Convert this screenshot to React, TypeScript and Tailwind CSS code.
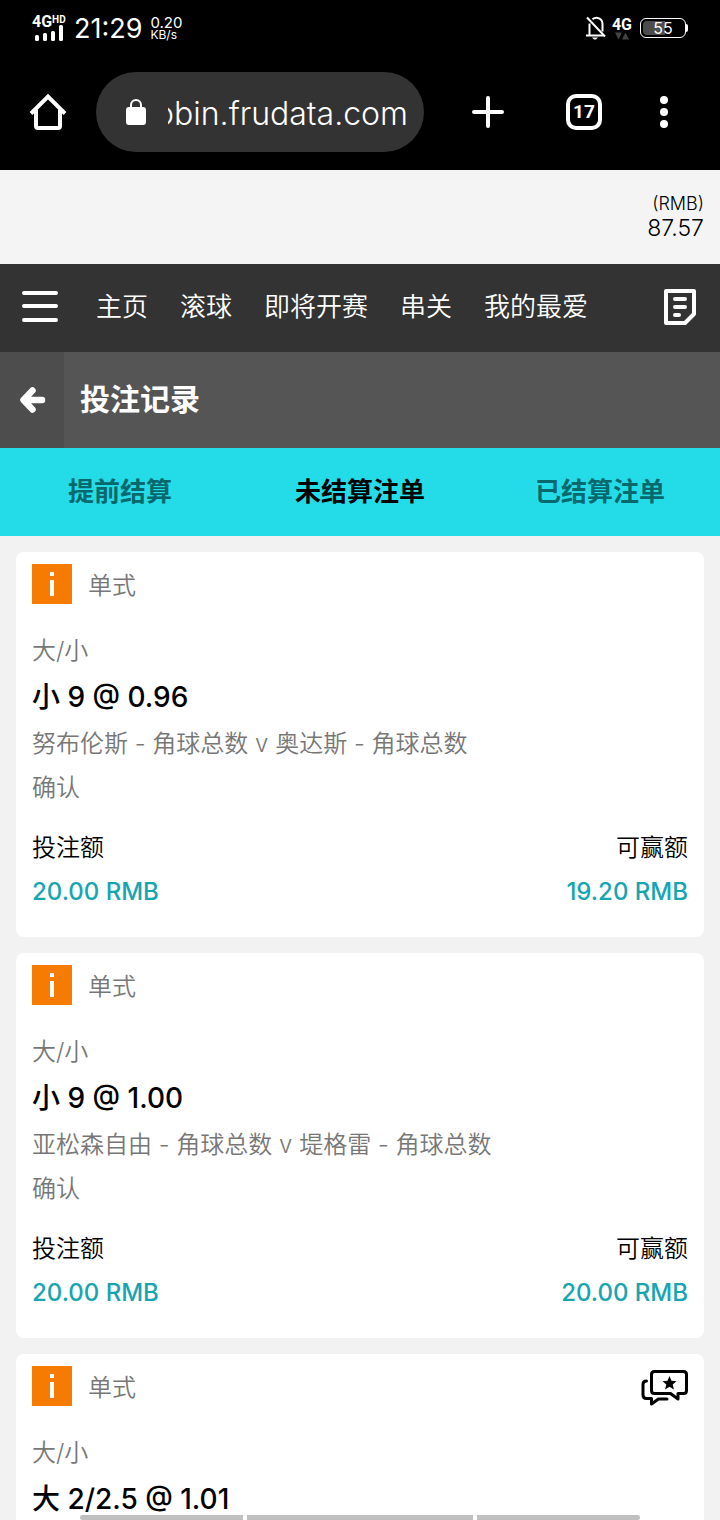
import React from 'react';

type Bet = {
  id: number;
  pick: string;
  match: string;
  stake: string;
  win: string;
  chat?: boolean;
};

const BETS: Bet[] = [
  {
    id: 1,
    pick: '小 9 @ 0.96',
    match: '努布伦斯 - 角球总数 v 奥达斯 - 角球总数',
    stake: '20.00 RMB',
    win: '19.20 RMB',
  },
  {
    id: 2,
    pick: '小 9 @ 1.00',
    match: '亚松森自由 - 角球总数 v 堤格雷 - 角球总数',
    stake: '20.00 RMB',
    win: '20.00 RMB',
  },
  { id: 3, pick: '大 2/2.5 @ 1.01', match: '', stake: '', win: '', chat: true },
];

const NAV = ['主页', '滚球', '即将开赛', '串关', '我的最爱'];
const TABS = ['提前结算', '未结算注单', '已结算注单'];

const StatusBar = () => {
  return (
    <div className="flex h-14 items-center justify-between px-8 text-white">
      <div className="flex items-center gap-2">
        <div className="flex w-[34px] flex-col">
          <div className="flex items-start font-[Roboto] font-bold">
            <span className="text-[16px] leading-[14px]">4G</span>
            <span className="text-[10px] leading-[9px]">HD</span>
          </div>
          <svg className="-mt-1 h-[16px] w-[34px]" viewBox="0 0 34 16" fill="currentColor">
            <rect x="3" y="10" width="4" height="6" rx="1.5" />
            <rect x="11" y="8" width="4" height="8" rx="1.5" />
            <rect x="19" y="6" width="4" height="10" rx="1.5" />
            <rect x="27" y="0" width="4" height="16" rx="1.5" />
          </svg>
        </div>
        <span className="pt-[2px] text-[27px] leading-8">21:29</span>
        <div className="flex flex-col">
          <span className="text-[15px] leading-[13px]">0.20</span>
          <span className="text-[12px] leading-[12px]">KB/s</span>
        </div>
      </div>
      <div className="flex items-center gap-1">
        <svg className="h-6 w-6" viewBox="0 0 24 24" fill="none" stroke="currentColor" strokeWidth="2">
          <path d="M2 19.5h17.500M5.500 19V7.500M8.500 3.200C12.500 0 18.500 2.400 18.500 8V15.500" />
          <path d="M3 1.500L21 20.500" />
          <path d="M8 21.500h6l-2 2h-2z" fill="currentColor" stroke="none" />
        </svg>
        <div className="flex flex-col items-center">
          <span className="font-[Roboto] text-[16px] leading-[15px] font-bold">4G</span>
          <svg className="h-2 w-4" viewBox="0 0 16 8" fill="#444">
            <path d="M1 .5h7L4.500 7.500zM8 7.500h7L11.500.5z" />
          </svg>
        </div>
        <div className="ml-1 flex items-center">
          <div className="relative flex h-5 w-[46px] items-center justify-center rounded-md border border-white">
            <div className="absolute top-[2px] left-[2px] h-[14px] w-[22px] rounded-l bg-[#4c4c4c]" />
            <span className="relative text-[16px] leading-4">55</span>
          </div>
          <div className="h-2 w-[2px] rounded-r bg-white" />
        </div>
      </div>
    </div>
  );
};

const BrowserBar = () => {
  return (
    <div className="flex h-[114px] items-center pr-8 pb-[2px] pl-7 text-white">
      <button aria-label="Home">
        <svg className="h-10 w-10" viewBox="0 0 40 40" fill="none" stroke="currentColor" strokeWidth="4">
          <path d="M3 21.5L20 4.5l17 17" />
          <path d="M8 18v16q0 2 2 2h20q2 0 2-2V18" />
        </svg>
      </button>
      <div className="ml-7 flex h-20 min-w-0 flex-1 items-center rounded-full bg-[#333] pr-4 pl-[30px]">
        <svg className="h-7 w-5 shrink-0" viewBox="0 0 20 28" fill="none">
          <rect y="9" width="20" height="18" rx="3" fill="#fff" />
          <path d="M5 10V7a5 5 0 0 1 10 0v3" stroke="#fff" strokeWidth="2" />
        </svg>
        <div className="ml-[22px] flex min-w-0 flex-1 justify-end overflow-hidden pt-1">
          <span className="text-[32px] leading-[44px] font-light whitespace-nowrap">obin.frudata.com</span>
        </div>
      </div>
      <button aria-label="New tab" className="ml-12">
        <svg className="h-8 w-8" viewBox="0 0 32 32" stroke="currentColor" strokeWidth="4" strokeLinecap="round">
          <path d="M2 16h28M16 2v28" />
        </svg>
      </button>
      <button className="ml-[62px] flex h-9 w-9 items-center justify-center rounded-[10px] border-4 border-white font-[Roboto] text-[19px] leading-5 font-bold">
        17
      </button>
      <button aria-label="Menu" className="ml-[52px] pr-5 pl-[6px]">
        <svg className="h-8 w-2" viewBox="0 0 8 32" fill="currentColor">
          <circle cx="4" cy="4" r="4" />
          <circle cx="4" cy="16" r="4" />
          <circle cx="4" cy="28" r="4" />
        </svg>
      </button>
    </div>
  );
};

const BetCard = ({ bet }: { bet: Bet }) => {
  return (
    <article className="rounded-lg bg-white px-4 pt-3 pb-[23px] text-[24px] leading-[44px] font-[350] text-[#777]">
      <div className="flex h-11 items-start">
        <svg className="h-10 w-10" viewBox="0 0 40 40">
          <rect width="40" height="40" fill="#f57c00" />
          <path d="M18 8h4v4h-4zM18 16h4v16h-4z" fill="#fff" />
        </svg>
        <span className="ml-4">单式</span>
        {bet.chat && (
          <button aria-label="Chat" className="mt-1 ml-auto text-black">
            <svg className="h-9 w-12" viewBox="0 0 48 36" fill="none" stroke="currentColor" strokeWidth="3" strokeLinejoin="round" strokeLinecap="round">
              <path d="M14.5 1.500h29q3 0 3 3v16q0 3-3 3H38v5.500l-7.500-5.500h-16q-3 0-3-3v-16q0-3 3-3z" />
              <path d="M6.500 11q-3.500 0-3.500 3.500v10.500q0 3.500 3.500 3.500H11.500V34l7-5H27" />
              <path d="M29.500 6l2 4.800 5 .4-3.800 3.300 1.200 5-4.400-2.700-4.400 2.700 1.200-5-3.800-3.300 5-.4z" fill="currentColor" stroke="none" />
            </svg>
          </button>
        )}
      </div>
      <p className="mt-[21px]">大/小</p>
      <h2 className="text-[28px] leading-[49px] font-medium text-black">{bet.pick}</h2>
      <p>{bet.match}</p>
      <p>确认</p>
      <dl className="mt-4 flex justify-between">
        <div>
          <dt className="text-black">投注额</dt>
          <dd className="font-medium text-[#17a5b1]">{bet.stake}</dd>
        </div>
        <div className="text-right">
          <dt className="text-black">可赢额</dt>
          <dd className="font-medium text-[#17a5b1]">{bet.win}</dd>
        </div>
      </dl>
    </article>
  );
};

const App = () => {
  return (
    <div className="relative flex h-screen flex-col overflow-hidden bg-[#f2f2f2] font-[Inter,'Noto_Sans_CJK_SC',sans-serif]">
      <div className="shrink-0 bg-black">
        <StatusBar />
        <BrowserBar />
      </div>
      <div className="flex h-[94px] shrink-0 flex-col items-end justify-center bg-[#f4f4f4] pr-4 pb-[2px] font-light text-black">
        <span className="text-[18px] leading-6">(RMB)</span>
        <span className="text-[23px] leading-6">87.57</span>
      </div>
      <nav className="flex h-22 shrink-0 items-center bg-[#333] pr-6 pb-[3px] pl-[22px] text-[26px] font-[350] text-white">
        <button aria-label="Menu">
          <svg className="h-9 w-9" viewBox="0 0 36 36" stroke="currentColor" strokeWidth="4" strokeLinecap="round">
            <path d="M2 4h32M2 17h32M2 31h32" />
          </svg>
        </button>
        <div className="ml-[38px] flex gap-8">
          {NAV.map((item) => (
            <a key={item} href="#">
              {item}
            </a>
          ))}
        </div>
        <button aria-label="Bets" className="ml-auto">
          <svg className="h-9 w-8" viewBox="0 0 32 36" fill="none" stroke="currentColor" strokeWidth="4">
            <path d="M2 2h28v23l-9 9H2z" strokeLinejoin="round" />
            <path d="M11 10h10M11 18h10M11 26h4" strokeLinecap="round" />
          </svg>
        </button>
      </nav>
      <header className="flex h-24 shrink-0 items-center bg-[#555] text-white">
        <button aria-label="Back" className="flex h-full w-16 items-center justify-center bg-[#4d4d4d]">
          <svg className="h-7 w-7" viewBox="0 0 28 28" fill="none" stroke="currentColor" strokeWidth="6.5" strokeLinecap="round" strokeLinejoin="round">
            <path d="M14.5 4.500L5.500 14l9 9.500M6.500 14H24" />
          </svg>
        </button>
        <h1 className="ml-4 pb-[2px] text-[30px] font-bold">投注记录</h1>
      </header>
      <div className="grid h-22 shrink-0 grid-cols-3 bg-[#24dce8] pb-[2px] text-[26px] font-bold text-[#07686d]">
        {TABS.map((tab, i) => (
          <button key={tab} className={i === 1 ? 'text-black' : ''}>
            {tab}
          </button>
        ))}
      </div>
      <main className="flex flex-col gap-4 p-4">
        {BETS.map((bet) => (
          <BetCard key={bet.id} bet={bet} />
        ))}
      </main>
      <div className="absolute inset-x-20 bottom-0 flex h-[5px] gap-1">
        <div className="flex-[163] rounded-l bg-[#c0c0c0]" />
        <div className="flex-[226] bg-[#c0c0c0]" />
        <div className="flex-[163] rounded-r bg-[#c0c0c0]" />
      </div>
    </div>
  );
};

export default App;
